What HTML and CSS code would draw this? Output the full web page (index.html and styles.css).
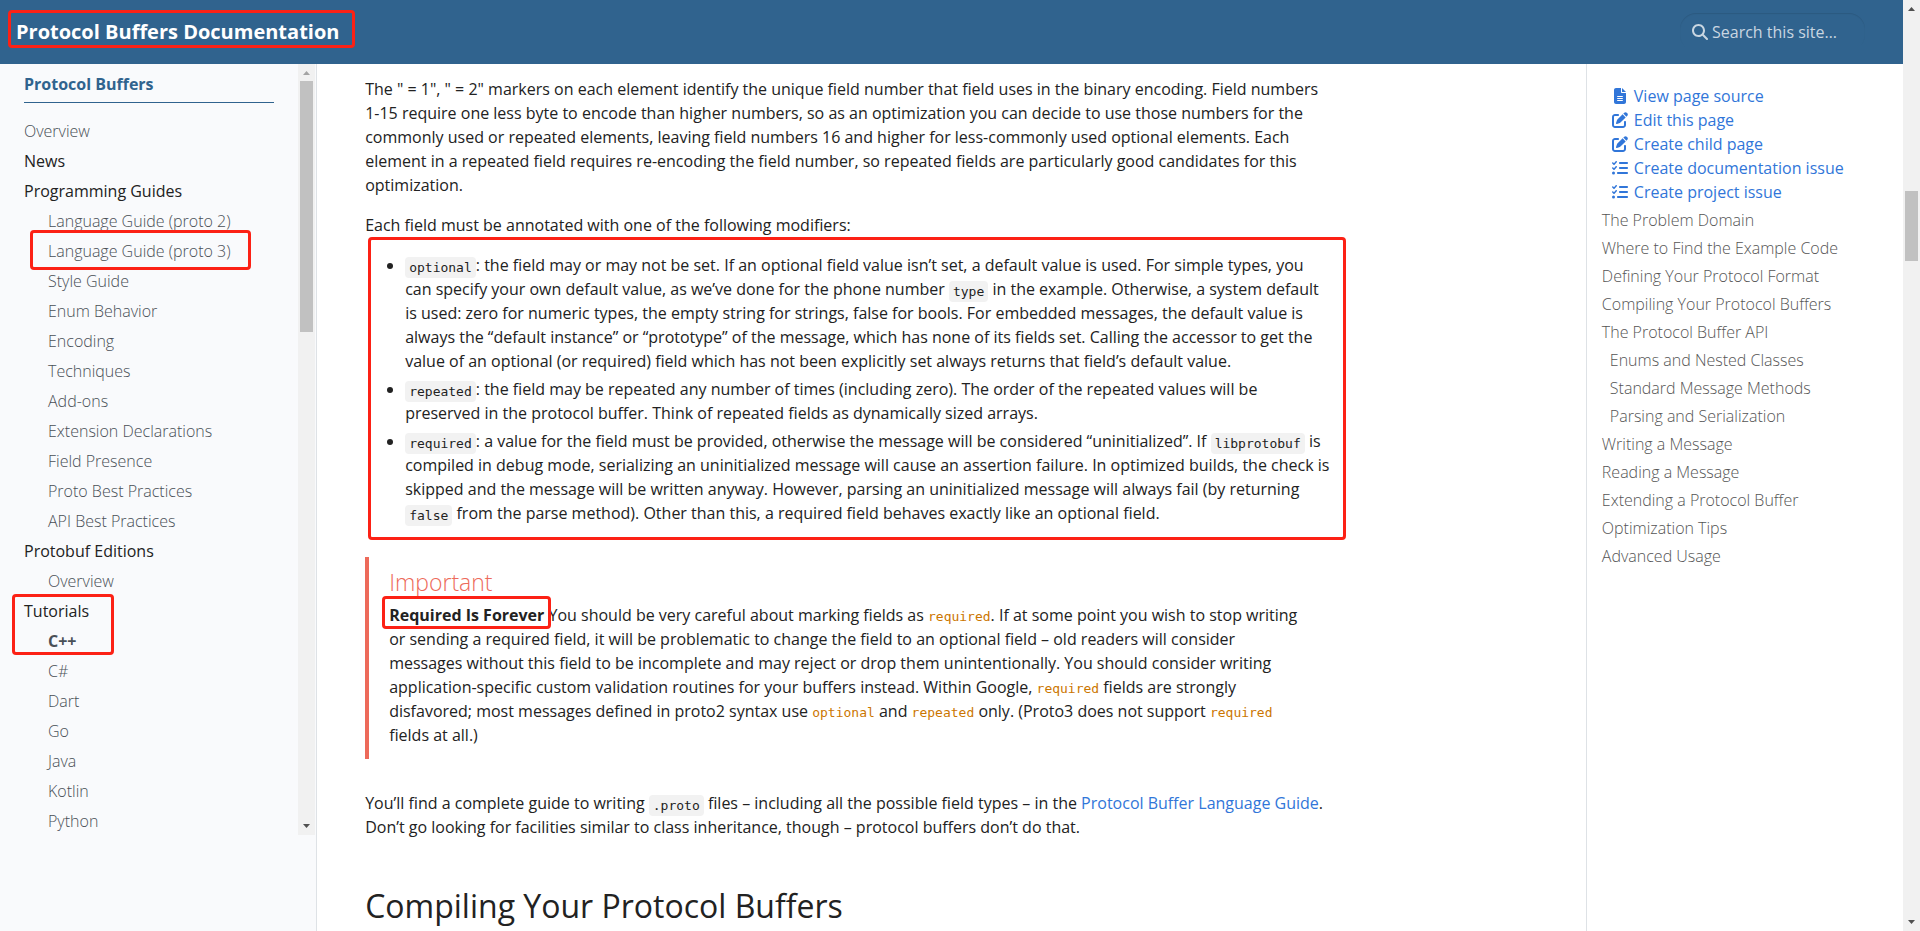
FILE: index.html
```html
<!DOCTYPE html>
<html lang="en">
<head>
<meta charset="utf-8">
<title>Protocol Buffers Documentation</title>
<link rel="stylesheet" href="styles.css">
</head>
<body>
<svg class="sprite" aria-hidden="true">
  <symbol id="i-search" viewBox="0 0 512 512"><path d="M416 208c0 45.900-14.900 88.300-40 122.700L502.600 457.400c12.500 12.500 12.500 32.800 0 45.300s-32.800 12.500-45.300 0L330.700 376c-34.400 25.200-76.800 40-122.700 40C93.100 416 0 322.900 0 208S93.100 0 208 0S416 93.100 416 208zM208 352a144 144 0 1 0 0-288 144 144 0 1 0 0 288z"/></symbol>
  <symbol id="i-file" viewBox="0 0 384 512"><path d="M64 0C28.700 0 0 28.700 0 64V448c0 35.300 28.700 64 64 64H320c35.300 0 64-28.700 64-64V160H256c-17.700 0-32-14.300-32-32V0H64zM256 0V128H384L256 0zM112 256H272c8.800 0 16 7.200 16 16s-7.200 16-16 16H112c-8.800 0-16-7.200-16-16s7.200-16 16-16zm0 64H272c8.800 0 16 7.200 16 16s-7.200 16-16 16H112c-8.800 0-16-7.200-16-16s7.200-16 16-16zm0 64H272c8.800 0 16 7.200 16 16s-7.200 16-16 16H112c-8.800 0-16-7.200-16-16s7.200-16 16-16z"/></symbol>
  <symbol id="i-edit" viewBox="0 0 512 512"><path d="M471.600 21.700c-21.900-21.900-57.300-21.900-79.200 0L362.300 51.700l97.900 97.900 30.100-30.100c21.900-21.900 21.900-57.300 0-79.200L471.600 21.700zm-299.200 220c-6.100 6.100-10.800 13.600-13.500 21.900l-29.600 88.800c-2.900 8.600-.6 18.100 5.800 24.600s15.900 8.700 24.600 5.800l88.800-29.600c8.200-2.700 15.700-7.400 21.900-13.500L437.700 172.300 339.700 74.300 172.400 241.700zM96 64C43 64 0 107 0 160V416c0 53 43 96 96 96H352c53 0 96-43 96-96V320c0-17.700-14.300-32-32-32s-32 14.300-32 32v96c0 17.700-14.300 32-32 32H96c-17.700 0-32-14.300-32-32V160c0-17.700 14.300-32 32-32h96c17.700 0 32-14.300 32-32s-14.300-32-32-32H96z"/></symbol>
  <symbol id="i-tasks" viewBox="0 0 512 512"><path d="M152.100 38.200c9.900 8.900 10.700 24 1.800 33.900l-72 80c-4.400 4.900-10.600 7.800-17.200 7.900s-12.900-2.400-17.600-7L7 113C-2.300 103.600-2.300 88.400 7 79s24.600-9.400 33.900 0l22.100 22.100 55.100-61.200c8.900-9.900 24-10.700 33.900-1.800zm0 160c9.900 8.900 10.700 24 1.800 33.900l-72 80c-4.400 4.900-10.600 7.800-17.200 7.900s-12.900-2.400-17.600-7L7 273c-9.400-9.400-9.400-24.600 0-33.900s24.600-9.400 33.900 0l22.100 22.100 55.100-61.200c8.900-9.900 24-10.700 33.900-1.800zM224 96c0-17.700 14.300-32 32-32H480c17.700 0 32 14.300 32 32s-14.300 32-32 32H256c-17.700 0-32-14.300-32-32zm0 160c0-17.700 14.300-32 32-32H480c17.700 0 32 14.300 32 32s-14.300 32-32 32H256c-17.700 0-32-14.300-32-32zM160 416c0-17.700 14.300-32 32-32H480c17.700 0 32 14.300 32 32s-14.300 32-32 32H192c-17.700 0-32-14.300-32-32zM48 368a48 48 0 1 1 0 96 48 48 0 1 1 0-96z"/></symbol>
  <symbol id="i-up" viewBox="0 0 17 17"><path d="M5 11h7L8.500 7z"/></symbol>
  <symbol id="i-down" viewBox="0 0 17 17"><path d="M5 6h7l-3.500 4z"/></symbol>
</svg>
<div class="window">
  <div class="page">
    <header class="navbar">
      <a class="brand marked" href="#">Protocol Buffers Documentation</a>
      <form class="search">
        <label for="q" aria-label="Search"><svg class="search-icon"><use href="#i-search"/></svg></label>
        <input id="q" type="search" placeholder="Search this site…">
      </form>
    </header>
    <div class="columns">
      <aside class="sidebar">
        <div class="sidebar-scroll">
          <nav class="sidebar-nav">
            <a class="sidebar-title" href="#">Protocol Buffers</a>
            <ul class="tree">
              <li><a href="#">Overview</a></li>
              <li><a class="section" href="#">News</a></li>
              <li><a class="section" href="#">Programming Guides</a>
                <ul>
                  <li><a href="#">Language Guide (proto 2)</a></li>
                  <li class="marked mark-guide"><a href="#">Language Guide (proto 3)</a></li>
                  <li><a href="#">Style Guide</a></li>
                  <li><a href="#">Enum Behavior</a></li>
                  <li><a href="#">Encoding</a></li>
                  <li><a href="#">Techniques</a></li>
                  <li><a href="#">Add-ons</a></li>
                  <li><a href="#">Extension Declarations</a></li>
                  <li><a href="#">Field Presence</a></li>
                  <li><a href="#">Proto Best Practices</a></li>
                  <li><a href="#">API Best Practices</a></li>
                </ul>
              </li>
              <li><a class="section" href="#">Protobuf Editions</a>
                <ul>
                  <li><a href="#">Overview</a></li>
                </ul>
              </li>
              <li class="marked mark-tutorials"><a class="section" href="#">Tutorials</a>
                <ul>
                  <li><a class="active" href="#">C++</a></li>
                  <li><a href="#">C#</a></li>
                  <li><a href="#">Dart</a></li>
                  <li><a href="#">Go</a></li>
                  <li><a href="#">Java</a></li>
                  <li><a href="#">Kotlin</a></li>
                  <li><a href="#">Python</a></li>
                </ul>
              </li>
            </ul>
          </nav>
          <div class="scrollbar at-top" aria-hidden="true">
            <svg><use href="#i-up"/></svg>
            <div class="track"><div class="thumb"></div></div>
            <svg><use href="#i-down"/></svg>
          </div>
        </div>
      </aside>
      <main class="content">
        <p>The " = 1", " = 2" markers on each element identify the unique field number that field uses in the binary encoding. Field numbers 1-15 require one less byte to encode than higher numbers, so as an optimization you can decide to use those numbers for the commonly used or repeated elements, leaving field numbers 16 and higher for less-commonly used optional elements. Each element in a repeated field requires re-encoding the field number, so repeated fields are particularly good candidates for this optimization.</p>
        <p>Each field must be annotated with one of the following modifiers:</p>
        <ul class="modifiers marked">
          <li><code>optional</code>: the field may or may not be set. If an optional field value isn’t set, a default value is used. For simple types, you can specify your own default value, as we’ve done for the phone number <code>type</code> in the example. Otherwise, a system default is used: zero for numeric types, the empty string for strings, false for bools. For embedded messages, the default value is always the “default instance” or “prototype” of the message, which has none of its fields set. Calling the accessor to get the value of an optional (or required) field which has not been explicitly set always returns that field’s default value.</li>
          <li><code>repeated</code>: the field may be repeated any number of times (including zero). The order of the repeated values will be preserved in the protocol buffer. Think of repeated fields as dynamically sized arrays.</li>
          <li><code>required</code>: a value for the field must be provided, otherwise the message will be considered “uninitialized”. If <code>libprotobuf</code> is compiled in debug mode, serializing an uninitialized message will cause an assertion failure. In optimized builds, the check is skipped and the message will be written anyway. However, parsing an uninitialized message will always fail (by returning <code>false</code> from the parse method). Other than this, a required field behaves exactly like an optional field.</li>
        </ul>
        <div class="alert">
          <h4>Important</h4>
          <p><strong class="marked">Required Is Forever</strong> You should be very careful about marking fields as <code>required</code>. If at some point you wish to stop writing or sending a required field, it will be problematic to change the field to an optional field – old readers will consider messages without this field to be incomplete and may reject or drop them unintentionally. You should consider writing application-specific custom validation routines for your buffers instead. Within Google, <code>required</code> fields are strongly disfavored; most messages defined in proto2 syntax use <code>optional</code> and <code>repeated</code> only. (Proto3 does not support <code>required</code> fields at all.)</p>
        </div>
        <p>You’ll find a complete guide to writing <code>.proto</code> files – including all the possible field types – in the <a href="#">Protocol Buffer Language Guide</a>. Don’t go looking for facilities similar to class inheritance, though – protocol buffers don’t do that.</p>
        <h2>Compiling Your Protocol Buffers</h2>
      </main>
      <aside class="toc">
        <div class="page-meta">
          <a href="#"><svg><use href="#i-file"/></svg>View page source</a>
          <a href="#"><svg><use href="#i-edit"/></svg>Edit this page</a>
          <a href="#"><svg><use href="#i-edit"/></svg>Create child page</a>
          <a href="#"><svg><use href="#i-tasks"/></svg>Create documentation issue</a>
          <a href="#"><svg><use href="#i-tasks"/></svg>Create project issue</a>
        </div>
        <nav>
          <ul class="toc-list">
            <li><a href="#">The Problem Domain</a></li>
            <li><a href="#">Where to Find the Example Code</a></li>
            <li><a href="#">Defining Your Protocol Format</a></li>
            <li><a href="#">Compiling Your Protocol Buffers</a></li>
            <li><a href="#">The Protocol Buffer API</a>
              <ul>
                <li><a href="#">Enums and Nested Classes</a></li>
                <li><a href="#">Standard Message Methods</a></li>
                <li><a href="#">Parsing and Serialization</a></li>
              </ul>
            </li>
            <li><a href="#">Writing a Message</a></li>
            <li><a href="#">Reading a Message</a></li>
            <li><a href="#">Extending a Protocol Buffer</a></li>
            <li><a href="#">Optimization Tips</a></li>
            <li><a href="#">Advanced Usage</a></li>
          </ul>
        </nav>
      </aside>
    </div>
  </div>
  <div class="scrollbar page-scrollbar" aria-hidden="true">
    <svg><use href="#i-up"/></svg>
    <div class="track"><div class="thumb"></div></div>
    <svg><use href="#i-down"/></svg>
  </div>
</div>
</body>
</html>
```
FILE: styles.css
```css
*, *::before, *::after { box-sizing: border-box; }

body {
  margin: 0;
  font: 400 16px/24px "Open Sans", "Noto Sans", sans-serif;
  color: #222;
  background: #fff;
}

a { color: #3176d9; text-decoration: none; }
ul { list-style: none; margin: 0; padding: 0; }
p { margin: 0 0 16px; }
.sprite { display: none; }

.window { display: flex; height: 100vh; overflow: hidden; }
.page { flex: 1; min-width: 0; display: flex; flex-direction: column; }

/* red annotation frames */
.marked { position: relative; }
.marked::after {
  content: "";
  position: absolute;
  border: 3px solid #fc2115;
  border-radius: 4px;
  pointer-events: none;
}
.brand.marked::after { inset: -10px -16px -4px -8px; }
.mark-guide::after { inset: -6px 23px -4px -18px; }
.mark-tutorials::after { top: -2px; left: -12px; width: 102px; height: 61px; }
.modifiers.marked::after { inset: -16px -14px -15px 3px; }
strong.marked::after { inset: -8px -7px -3px -7px; }

/* header */
.navbar {
  flex: none;
  display: flex;
  align-items: center;
  justify-content: space-between;
  height: 64px;
  padding: 0 38px 0 16px;
  background: #30638e;
}
.brand { color: #fff; font-size: 20px; font-weight: 700; }
.search { display: flex; align-items: center; width: 185px; position: relative; }
.search label { position: absolute; left: 12px; display: flex; }
.search-icon { width: 16px; height: 16px; fill: #c9d6e1; }
.search input {
  width: 100%;
  height: 38px;
  padding: 0 12px 0 32px;
  border: 0;
  border-radius: 16px;
  background: transparent;
  box-shadow: inset 0 1px 1px rgba(0, 0, 0, .1);
  color: #fff;
  font: inherit;
}
.search input::placeholder { color: #c9d6e1; opacity: 1; }

/* columns */
.columns {
  flex: 1;
  min-height: 0;
  display: grid;
  grid-template-columns: minmax(0, 2fr) minmax(0, 8fr) minmax(0, 2fr);
}

/* left navigation */
.sidebar { background: #f9fafc; border-right: 1px solid #dee2e6; }
.sidebar-scroll {
  display: flex;
  justify-content: space-between;
  height: calc(100vh - 160px);
  padding-right: 1px;
  overflow: hidden;
}
.sidebar-nav { width: 274px; padding: 8px 0 0 24px; }
.sidebar-title {
  display: block;
  height: 31px;
  border-bottom: 1px solid #30638e;
  color: #30638e;
  font-weight: 700;
}
.tree { padding-top: 13px; }
.tree ul { padding-left: 24px; }
.tree a { display: block; padding: 3px 0; color: #495057; font-weight: 300; }
.tree a.section { color: #222; font-weight: 400; }
.tree a.active { font-weight: 700; }

/* scrollbars */
.scrollbar {
  flex: none;
  width: 17px;
  display: flex;
  flex-direction: column;
  background: #f1f1f1;
}
.scrollbar svg { flex: none; width: 17px; height: 17px; fill: #505050; }
.scrollbar.at-top svg:first-child { fill: #a3a3a3; }
.track { flex: 1; padding: 0 2px; }
.thumb { height: 34%; background: #c1c1c1; }
.page-scrollbar .track { display: flex; flex-direction: column; }
.page-scrollbar .track::before { content: ""; height: 19.4%; }
.page-scrollbar .thumb { height: 7.8%; }

/* article */
.content { padding: 13px 12px 0 48px; overflow: hidden; }
.content > * { max-width: 80%; }
.modifiers { padding-left: 40px; list-style: disc; }
.modifiers li + li { margin-top: 4px; }
code { font: 13px/16px "DejaVu Sans Mono", monospace; }
.modifiers code, .content > p code {
  padding: 3px 4px;
  border-radius: 4px;
  background: #f2f2f2;
  vertical-align: -1px;
}
.alert {
  margin: 32px 0;
  padding: 12px 20px;
  border-left: 4px solid #ed6a5a;
}
.alert h4 { margin: 0 0 8px; font-size: 23px; line-height: 26px; font-weight: 300; color: #ed6a5a; }
.alert p { margin: 0; }
.alert code { color: #cb7600; }
h2 { margin: 47px 0 0; font-size: 32px; line-height: 40px; font-weight: 400; }

/* right column */
.toc { padding: 20px 15px 0; border-left: 1px solid #dee2e6; }
.page-meta { padding-left: 8px; }
.page-meta a { display: flex; align-items: center; gap: 4px; }
.page-meta svg { width: 20px; height: 16px; fill: #3176d9; }
.toc-list { padding-top: 2px; }
.toc-list ul { padding-left: 8px; }
.toc-list a { display: block; padding: 2px 0; color: #555; font-weight: 300; }
```
